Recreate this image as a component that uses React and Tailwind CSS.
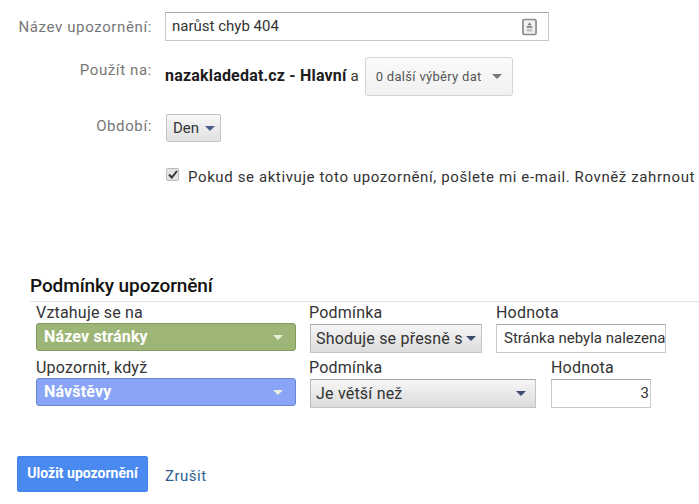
const font = { fontFamily: "Roboto, sans-serif" };

function Arrow({ className }) {
  return (
    <svg width="10" height="5" viewBox="0 0 10 5" className={className}>
      <path d="M0 0H10L5 5Z" fill="currentColor" />
    </svg>
  );
}

function ColorSelect({ label, bg, border, arrow = "text-[#e8eedd]" }) {
  return (
    <div className={`w-[260px] h-[28px] rounded-[3px] border flex items-center justify-between pl-[7px] pr-[12px] ${bg} ${border}`}>
      <span className="text-white font-bold text-[16px] tracking-[0.15px] leading-none">{label}</span>
      <Arrow className={arrow} />
    </div>
  );
}

function GraySelect({ label, className }) {
  return (
    <div className={`h-[29px] border border-[#c4c4c4] border-t-[#aaa] border-l-[#bbb] bg-gradient-to-b from-[#f6f6f6] to-[#dcdcdc] flex items-center justify-between pl-[5px] pr-[5px] text-[16px] text-[#333] ${className}`}>
      <span className="tracking-[0.2px] whitespace-nowrap">{label}</span>
      <Arrow className="text-[#3b4a6e]" />
    </div>
  );
}

function Label({ children, className = "" }) {
  return <div className={`text-[16px] leading-[18px] tracking-[0.2px] text-[#333] whitespace-nowrap ${className}`}>{children}</div>;
}

function FormLabel({ children, className = "" }) {
  return (
    <div className={`w-[152px] shrink-0 text-right text-[15px] tracking-[0.62px] text-[#777] whitespace-nowrap ${className}`}>
      {children}
    </div>
  );
}

export default function App() {
  return (
    <div className="w-[699px] h-[504px] bg-white overflow-hidden relative" style={font}>
      <div className="pt-[12px] flex items-center">
        <FormLabel className="mt-[1px]">Název upozornění:</FormLabel>
        <div className="ml-[13px] w-[384px] h-[29px] border border-[#c9c9c9] border-t-[#a6a6a6] flex items-center justify-between pl-[6px] pr-[11px]">
          <span className="text-[15px] text-[#333]">narůst chyb 404</span>
          <svg width="15" height="18" viewBox="0 0 16 18">
            <rect x="1" y="1" width="14" height="16" rx="1.5" fill="#f1f1f1" stroke="#8a8a8a" strokeWidth="1.8" />
            <path d="M8 4l2 3H6Z" fill="#777" />
            <rect x="5" y="8" width="6" height="2" fill="#888" />
            <rect x="5" y="11" width="6" height="3" fill="#c4c4c4" />
          </svg>
        </div>
      </div>

      <div className="mt-[16px] flex items-start">
        <FormLabel className="mt-[2px]">Použít na:</FormLabel>
        <div className="ml-[13px] flex items-center h-[39px]">
          <span className="text-[16px] font-bold text-[#1c1c1c] tracking-[0.19px] whitespace-nowrap -mt-[1px]">nazakladedat.cz - Hlavní</span>
          <span className="ml-[4px] text-[15px] text-[#333]">a</span>
          <div className="ml-[6px] w-[148px] h-[39px] rounded-[3px] border border-[#d4d4d4] bg-gradient-to-b from-[#fafafa] to-[#f1f1f1] flex items-center justify-between pl-[10px] pr-[10px]">
            <span className="text-[13px] text-[#555] tracking-[0.3px] whitespace-nowrap">0 další výběry dat</span>
            <Arrow className="text-[#777]" />
          </div>
        </div>
      </div>

      <div className="mt-[18px] flex items-center">
        <FormLabel className="-mt-[4px]">Období:</FormLabel>
        <div className="ml-[14px] w-[55px] h-[28px] rounded-[2px] border border-[#c4c4c4] bg-gradient-to-b from-[#f8f8f8] to-[#e0e0e0] flex items-center gap-[6px] pl-[6px]">
          <span className="text-[15px] text-[#333]">Den</span>
          <Arrow className="text-[#4a5f8a]" />
        </div>
      </div>

      <div className="mt-[26px] ml-[166px] flex items-center h-[18px]">
        <div className="w-[13px] h-[13px] -mt-[5px] rounded-[2px] border border-[#bbb] bg-[#e4e4e4] flex items-center justify-center">
          <svg width="10" height="9" viewBox="0 0 10 9">
            <path d="M1 4.5L3.8 7.5L9 1" fill="none" stroke="#333" strokeWidth="2" />
          </svg>
        </div>
        <span className="ml-[9px] text-[15px] tracking-[0.61px] text-[#333] whitespace-nowrap">
          Pokud se aktivuje toto upozornění, pošlete mi e-mail. Rovněž zahrnout
        </span>
      </div>

      <div className="mt-[84px] ml-[30px] border-b border-[#e2e2e2] h-[32px] flex items-center">
        <h2 className="text-[19px] font-medium tracking-[-0.1px] text-[#111] leading-none">Podmínky upozornění</h2>
      </div>

      <div className="ml-[36px] mt-[2px] flex">
        <div className="w-[273px] shrink-0">
          <Label>Vztahuje se na</Label>
          <div className="mt-[1px]"><ColorSelect label="Název stránky" bg="bg-[#9db677]" border="border-[#82995f]" /></div>
        </div>
        <div className="w-[187px] shrink-0">
          <Label>Podmínka</Label>
          <GraySelect label="Shoduje se přesně s" className="w-[172px] mt-[2px] ml-[1px]" />
        </div>
        <div>
          <Label>Hodnota</Label>
          <div className="mt-[2px] w-[170px] h-[29px] border border-[#c9c9c9] border-t-[#a6a6a6] flex items-center pl-[7px] text-[15px] text-[#333] whitespace-nowrap overflow-hidden">
            Stránka nebyla nalezena
          </div>
        </div>
      </div>

      <div className="ml-[36px] mt-[6px] flex">
        <div className="w-[273px] shrink-0">
          <Label>Upozornit, když</Label>
          <div className="mt-[1px]"><ColorSelect label="Návštěvy" bg="bg-[#8aa5f5]" border="border-[#6c85cf]" /></div>
        </div>
        <div className="w-[242px] shrink-0">
          <Label>Podmínka</Label>
          <GraySelect label="Je větší než" className="w-[226px] mt-[2px] ml-[1px] pr-[9px]" />
        </div>
        <div>
          <Label>Hodnota</Label>
          <div className="mt-[2px] w-[100px] h-[29px] border border-[#c9c9c9] border-t-[#a6a6a6] flex items-center justify-end pr-[1px] text-[15px] text-[#333]">
            3
          </div>
        </div>
      </div>

      <div className="mt-[48px] ml-[17px] flex items-center">
        <button className="w-[131px] h-[36px] rounded-[2px] bg-[#4a8af0] border border-[#4285e8] text-white font-bold text-[14px] pb-[2px]">
          Uložit upozornění
        </button>
        <a className="ml-[17px] mt-[4px] text-[15px] tracking-[0.5px] text-[#2a5f8f]">Zrušit</a>
      </div>
    </div>
  );
}
